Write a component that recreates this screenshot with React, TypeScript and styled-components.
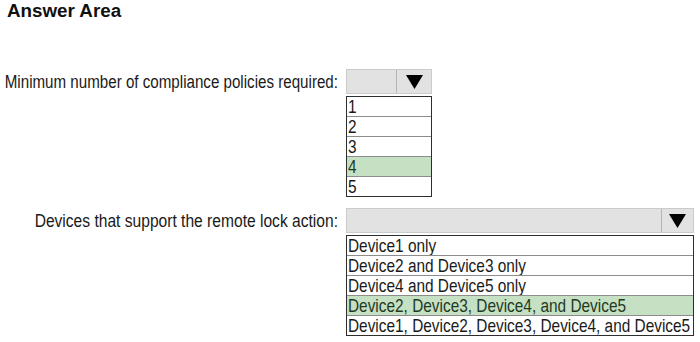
import styled, { createGlobalStyle } from "styled-components";

const GlobalStyle = createGlobalStyle`
  body {
    margin: 0;
    background: #ffffff;
    font-family: "Liberation Sans", Arial, sans-serif;
    color: #1a1a1a;
  }
`;

type DropProps = {
  options: string[];
  selected: number;
  width: number;
  arrowWidth: number;
};

const Dropdown = ({ options, selected, width, arrowWidth }: DropProps) => {
  return (
    <SelectBox $width={width}>
      <Header>
        <HeaderField />
        <ArrowCell $width={arrowWidth}>
          <svg width="17" height="14" viewBox="0 0 17 14">
            <polygon points="0,0 17,0 8.5,14" fill="#000" />
          </svg>
        </ArrowCell>
      </Header>
      <OptionList>
        {options.map((opt, i) => (
          <OptionRow key={opt} $active={i === selected}>
            <Tall>{opt}</Tall>
          </OptionRow>
        ))}
      </OptionList>
    </SelectBox>
  );
};

const App = () => {
  return (
    <>
      <GlobalStyle />
      <Page>
        <Title>Answer Area</Title>
        <Form>
          <Label $size={15.15}>
            <Tall>Minimum number of compliance policies required:</Tall>
          </Label>
          <Dropdown
            options={["1", "2", "3", "4", "5"]}
            selected={3}
            width={86}
            arrowWidth={34}
          />
          <Label $size={15.6}>
            <Tall>Devices that support the remote lock action:</Tall>
          </Label>
          <Dropdown
            options={[
              "Device1 only",
              "Device2 and Device3 only",
              "Device4 and Device5 only",
              "Device2, Device3, Device4, and Device5",
              "Device1, Device2, Device3, Device4, and Device5",
            ]}
            selected={3}
            width={348}
            arrowWidth={31}
          />
        </Form>
      </Page>
    </>
  );
};

export default App;

// ----style----
const Page = styled.div`
  padding: 0 0 0 7px;
`;

const Title = styled.h1`
  margin: 0;
  font-size: 18.8px;
  line-height: 21px;
  font-weight: bold;
  color: #111;
`;

const Form = styled.div`
  margin-top: 48px;
  display: grid;
  grid-template-columns: 331px auto;
  column-gap: 8px;
  row-gap: 11px;
  align-items: start;
`;

// the source text is a tall, narrow face; stretch a regular one to match
const Tall = styled.span`
  display: inline-block;
  transform: scaleY(1.2);
`;

const Label = styled.div<{ $size: number }>`
  justify-self: end;
  font-size: ${(p) => p.$size}px;
  line-height: 25px;
  white-space: nowrap;
  color: #1a1a1a;
`;

const SelectBox = styled.div<{ $width: number }>`
  width: ${(p) => p.$width}px;
  display: flex;
  flex-direction: column;
  gap: 2px;
`;

const Header = styled.div`
  display: flex;
  height: 25px;
  box-sizing: border-box;
  background: #e2e2e2;
  border: 1px solid #cbcbcb;
`;

const HeaderField = styled.div`
  flex: 1;
`;

const ArrowCell = styled.div<{ $width: number }>`
  width: ${(p) => p.$width}px;
  border-left: 1px solid #b5b5b5;
  display: flex;
  align-items: center;
  justify-content: center;
`;

const OptionList = styled.div`
  border: 1px solid #2e2e2e;
  background: #ffffff;
`;

const OptionRow = styled.div<{ $active: boolean }>`
  height: 19px;
  line-height: 19px;
  padding-left: 1px;
  font-size: 15.4px;
  white-space: nowrap;
  overflow: hidden;
  color: ${(p) => (p.$active ? "#1f3a1f" : "#1a1a1a")};
  background: ${(p) => (p.$active ? "#c6e0c4" : "#ffffff")};
  border-bottom: 1px solid #8c8c8c;

  &:last-child {
    border-bottom: none;
  }
`;
